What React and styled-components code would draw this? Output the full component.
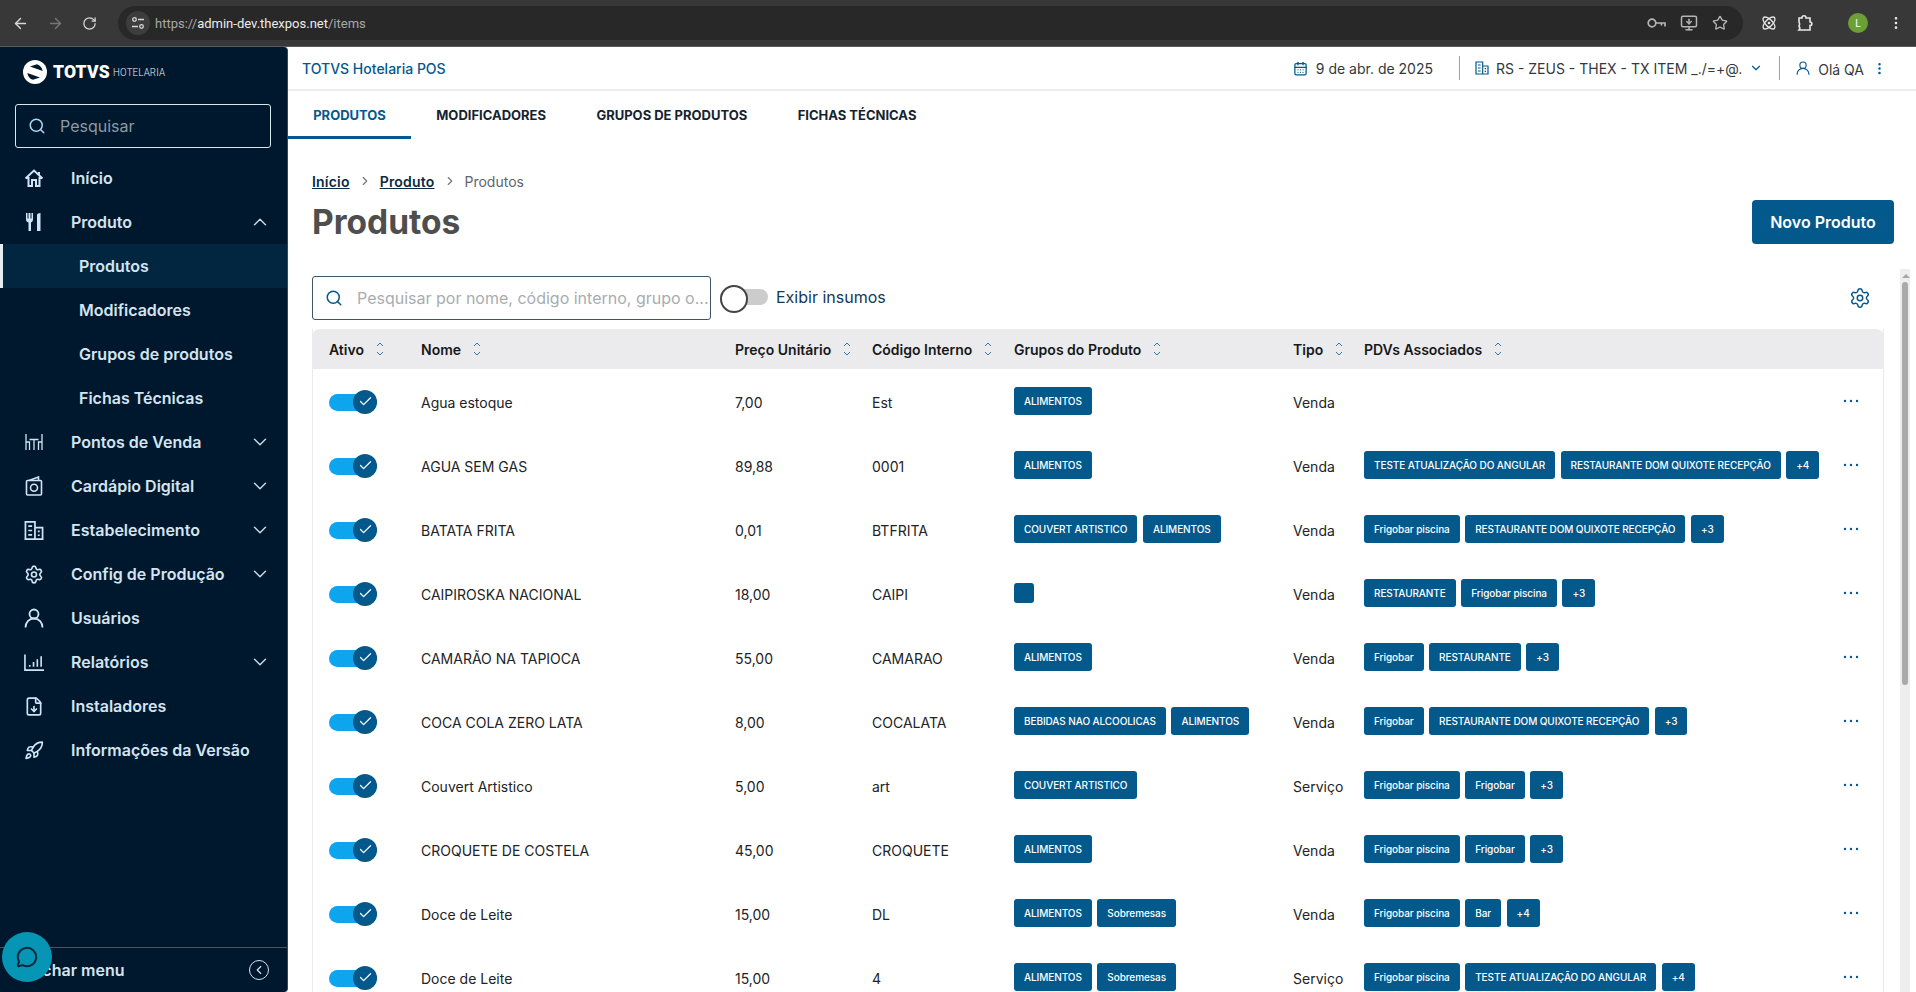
import styled, { createGlobalStyle } from 'styled-components';
import {
  ArrowLeft, ArrowRight, RotateCw, MonitorDown, Star, Atom,
  EllipsisVertical, Search, Settings, FileDown, Rocket,
  ChevronUp, ChevronDown, ChevronRight, ChevronLeft, CalendarDays, Check, MessageCircle,
} from 'lucide-react';

const GlobalStyle = createGlobalStyle`
  html, body { margin: 0; padding: 0; height: 100%; overflow: hidden; background: #fff; }
  body { font-family: Inter, "Liberation Sans", sans-serif; }
  * { box-sizing: border-box; }
`;

const primary = '#03588c';

const Page = styled.div`
  width: 1916px;
  height: 992px;
  display: flex;
  flex-direction: column;
  overflow: hidden;
  position: relative;
`;

// barra do navegador
const BrowserBar = styled.div`
  height: 47px;
  flex: none;
  display: flex;
  align-items: center;
  background: #383838;
  border-bottom: 1px solid #5a5a5a;
  color: #d8d8d8;
  padding-left: 12px;
`;
const NavIcons = styled.div`
  display: flex;
  align-items: center;
  gap: 18px;
  width: 106px;
  svg:nth-child(2) { color: #777; }
`;
const AddressPill = styled.div`
  width: 1625px;
  height: 34px;
  border-radius: 17px;
  background: #282828;
  display: flex;
  align-items: center;
  padding: 0 15px 0 8px;
`;
const SiteIcon = styled.span`
  width: 24px;
  height: 24px;
  border-radius: 50%;
  background: #3d3d3d;
  display: flex;
  align-items: center;
  justify-content: center;
  margin-right: 5px;
`;
const Url = styled.span`
  font: 13px Roboto, "Liberation Sans", sans-serif;
  color: #a8a8a8;
  b { font-weight: 400; color: #ececec; }
`;
const PillIcons = styled.div`
  margin-left: auto;
  display: flex;
  align-items: center;
  gap: 14px;
  color: #b5b5b5;
`;
const ChromeRight = styled.div`
  flex: 1;
  display: flex;
  align-items: center;
  justify-content: flex-end;
  gap: 20px;
  padding-right: 12px;
  color: #e8e8e8;
`;
const Avatar = styled.span`
  width: 20px;
  height: 20px;
  border-radius: 50%;
  background: #6c9f36;
  color: #fff;
  font: 10px Roboto, sans-serif;
  display: flex;
  align-items: center;
  justify-content: center;
  margin-left: 14px;
`;

const Body = styled.div`
  flex: 1;
  min-height: 0;
  display: flex;
`;

// menu lateral
const Sidebar = styled.aside`
  width: 288px;
  flex: none;
  background: #00182d;
  border-top-right-radius: 4px;
  border-bottom-right-radius: 4px;
  display: flex;
  flex-direction: column;
  border-right: 1px solid #3c4650;
`;
const LogoRow = styled.div`
  height: 57px;
  display: flex;
  align-items: center;
  padding: 0 0 7px 23px;
  color: #fff;
`;
const LogoText = styled.span`
  font: 900 17.500px Roboto, "Liberation Sans", sans-serif;
  margin-left: 6px;
  letter-spacing: .2px;
`;
const LogoSub = styled.span`
  display: inline-block;
  font: 300 11px Roboto, "Liberation Sans", sans-serif;
  margin-left: 3px;
  letter-spacing: .2px;
  color: #e8eef2;
  transform: scaleX(.88);
  transform-origin: left;
`;
const SideSearch = styled.div`
  margin: 0 16px 0 15px;
  height: 44px;
  border: 1px solid #dbe7ef;
  border-radius: 3px;
  display: flex;
  align-items: center;
  gap: 14px;
  padding-left: 12px;
  color: #a9d8f5;
  font-size: 16px;
  span { color: #8d9aa5; }
`;
const Nav = styled.nav`
  margin-top: 8px;
  display: flex;
  flex-direction: column;
`;
const NavItem = styled.div`
  height: 44px;
  display: flex;
  align-items: center;
  padding: ${p => (p.$sub ? '0 0 0 79px' : '0 16px 0 24px')};
  color: #d4e4f0;
  font-size: 16px;
  font-weight: 600;
  background: ${p => (p.$active ? '#02263f' : 'transparent')};
  ${p => p.$active && 'border-left: 3px solid #e6eef4; padding-left: 76px;'}
`;
const NavIcon = styled.span`
  width: 20px;
  height: 24px;
  margin-right: 27px;
  display: flex;
  align-items: center;
  justify-content: center;
  color: #cfe5f5;
`;
const NavChevron = styled.span`
  margin-left: auto;
  display: flex;
  color: #c8d8e4;
`;
const SideFooter = styled.div`
  margin-top: auto;
  height: 45px;
  border-top: 1px solid #4a545e;
  display: flex;
  align-items: center;
  justify-content: space-between;
  padding: 0 18px 0 24px;
  color: #d4e4f0;
  font-weight: 600;
  font-size: 16px;
`;
const CollapseBtn = styled.span`
  width: 20px;
  height: 20px;
  border: 1.5px solid #d4e4f0;
  border-radius: 50%;
  display: flex;
  align-items: center;
  justify-content: center;
`;
const ChatBubble = styled.div`
  position: absolute;
  left: 2px;
  top: 932px;
  width: 50px;
  height: 50px;
  border-radius: 50%;
  background: #0795b5;
  color: #012a3c;
  display: flex;
  align-items: center;
  justify-content: center;
`;

// conteudo
const Main = styled.main`
  flex: 1;
  min-width: 0;
  display: flex;
  flex-direction: column;
  background: #fff;
`;
const TopBar = styled.header`
  height: 44px;
  flex: none;
  border-bottom: 2px solid #ececee;
  display: flex;
  align-items: center;
  padding: 0 29px 0 14px;
  font-size: 14px;
  color: #33383d;
`;
const AppName = styled.span`
  color: ${primary};
  font-weight: 500;
  font-size: 14px;
`;
const TopInfo = styled.div`
  margin-left: auto;
  display: flex;
  align-items: center;
  height: 24px;
`;
const InfoBlock = styled.div`
  display: flex;
  align-items: center;
  gap: ${p => p.$gap ?? 8}px;
  padding-right: ${p => p.$pad ?? 24}px;
  color: #33383d;
  svg { color: ${primary}; }
`;
const InfoDivider = styled.span`
  width: 1px;
  height: 24px;
  background: #7fa9c4;
  margin-right: ${p => p.$space ?? 16}px;
`;
const Greeting = styled.span`
  margin-top: 3px;
`;
const Tabs = styled.div`
  height: 48px;
  flex: none;
  display: flex;
  align-items: stretch;
`;
const Tab = styled.div`
  padding: 0 25.200px;
  display: flex;
  align-items: center;
  font-size: 13px;
  font-weight: 700;
  color: ${p => (p.$active ? primary : '#14232f')};
  border-bottom: 3px solid ${p => (p.$active ? primary : 'transparent')};
  border-top: 3px solid transparent;
`;
const Content = styled.div`
  flex: 1;
  min-height: 0;
  display: flex;
  flex-direction: column;
  padding: 0 6px 0 24px;
`;
const Breadcrumb = styled.div`
  margin-top: 32px;
  height: 20px;
  flex: none;
  display: flex;
  align-items: center;
  gap: 8px;
  font-size: 14px;
  color: #60666c;
  svg { color: #777; }
`;
const Crumb = styled.a`
  color: #0c2a44;
  font-weight: 600;
  letter-spacing: .2px;
  text-decoration: underline;
`;
const TitleRow = styled.div`
  display: flex;
  align-items: flex-start;
  justify-content: space-between;
  height: 78px;
  flex: none;
  padding-right: 16px;
`;
const Title = styled.h1`
  margin: 9px 0 0;
  font-size: 33.500px;
  line-height: 44px;
  font-weight: 700;
  color: #4e4e4e;
`;
const PrimaryButton = styled.button`
  width: 142px;
  height: 44px;
  margin-top: 9px;
  border: 0;
  border-radius: 4px;
  background: ${primary};
  color: #fff;
  font: 600 16px Inter, sans-serif;
`;
const ScrollRow = styled.div`
  flex: 1;
  min-height: 0;
  display: flex;
  gap: 16px;
`;
const TableColumn = styled.div`
  flex: 1;
  min-width: 0;
  padding-top: 7px;
`;
const Toolbar = styled.div`
  height: 44px;
  display: flex;
  align-items: center;
`;
const FilterSearch = styled.div`
  width: 399px;
  height: 44px;
  border: 1px solid #3f5566;
  border-radius: 3px;
  display: flex;
  align-items: center;
  gap: 14px;
  padding-left: 12px;
  font-size: 16px;
  color: #a9acb0;
  white-space: nowrap;
  svg { color: ${primary}; }
`;
const SwitchOff = styled.span`
  width: 48px;
  height: 16px;
  margin: -3px 0 0 9px;
  background: #cccccc;
  border-radius: 8px;
  position: relative;
  &::before {
    content: '';
    position: absolute;
    left: 0;
    top: -4px;
    width: 24px;
    height: 24px;
    border-radius: 50%;
    border: 2px solid #444;
    background: #fff;
  }
`;
const SwitchLabel = styled.span`
  margin: -2px 0 0 8px;
  font-size: 16px;
  color: #123a58;
`;
const GearButton = styled.span`
  margin: 0 13px 0 auto;
  display: flex;
  color: ${primary};
`;
const Table = styled.div`
  margin-top: 9px;
  border-left: 1px solid #ebebed;
  border-right: 1px solid #ebebed;
`;
const Row = styled.div`
  display: grid;
  grid-template-columns: 92px 314px 137px 142px 279px 71px 1fr 44px;
  align-items: center;
  padding: 2px 0 0 16px;
  height: 64px;
  ${p => p.$head && 'height: 40px; padding: 0 0 0 17px; background: #ebebed; border-radius: 8px 8px 0 0; margin: 0 -1px;'}
`;
const HeadCell = styled.div`
  display: flex;
  align-items: center;
  gap: 12px;
  font-size: 14px;
  font-weight: 600;
  color: #16181a;
  white-space: nowrap;
`;
const SortIcon = styled.svg`
  flex: none;
  color: #2f78a8;
`;
const Cell = styled.div`
  font-size: 14px;
  color: #212326;
  white-space: nowrap;
`;
const ActiveSwitch = styled.span`
  display: block;
  width: 48px;
  height: 17px;
  background: #0ea5ef;
  border-radius: 9px;
  position: relative;
`;
const ActiveKnob = styled.span`
  position: absolute;
  right: 0;
  top: -4px;
  width: 24px;
  height: 24px;
  border-radius: 50%;
  background: ${primary};
  color: #fff;
  display: flex;
  align-items: center;
  justify-content: center;
`;
const TagList = styled.div`
  display: flex;
  align-items: center;
  gap: 5.500px;
  margin-top: -2px;
`;
const Tag = styled.span`
  height: ${p => (p.$empty ? 20 : 28)}px;
  min-width: 20px;
  padding: 0 ${p => (p.$empty ? 0 : 10)}px;
  border-radius: 3px;
  background: ${primary};
  color: #fff;
  font-size: 10px;
  font-weight: 500;
  letter-spacing: -.08px;
  display: flex;
  align-items: center;
  white-space: nowrap;
`;
const MoreCell = styled.div`
  display: flex;
  color: ${primary};
  margin: -2px 0 0 2px;
`;
const Scrollbar = styled.div`
  width: 10px;
  flex: none;
  background: #eeeeef;
  padding: 5px 2px 0;
`;
const ScrollArrow = styled.div`
  width: 0;
  height: 0;
  margin: 0 auto 4px;
  border-left: 4px solid transparent;
  border-right: 4px solid transparent;
  border-bottom: 4px solid #a8a8a8;
`;
const ScrollThumb = styled.div`
  height: 403px;
  background: #ababab;
  border-radius: 3px;
`;

const rows = [
  { nome: 'Agua estoque', preco: '7,00', cod: 'Est', grupos: ['ALIMENTOS'], tipo: 'Venda', pdvs: [] },
  { nome: 'AGUA SEM GAS', preco: '89,88', cod: '0001', grupos: ['ALIMENTOS'], tipo: 'Venda', pdvs: ['TESTE ATUALIZAÇÃO DO ANGULAR', 'RESTAURANTE DOM QUIXOTE RECEPÇÃO', '+4'] },
  { nome: 'BATATA FRITA', preco: '0,01', cod: 'BTFRITA', grupos: ['COUVERT ARTISTICO', 'ALIMENTOS'], tipo: 'Venda', pdvs: ['Frigobar piscina', 'RESTAURANTE DOM QUIXOTE RECEPÇÃO', '+3'] },
  { nome: 'CAIPIROSKA NACIONAL', preco: '18,00', cod: 'CAIPI', grupos: [''], tipo: 'Venda', pdvs: ['RESTAURANTE', 'Frigobar piscina', '+3'] },
  { nome: 'CAMARÃO NA TAPIOCA', preco: '55,00', cod: 'CAMARAO', grupos: ['ALIMENTOS'], tipo: 'Venda', pdvs: ['Frigobar', 'RESTAURANTE', '+3'] },
  { nome: 'COCA COLA ZERO LATA', preco: '8,00', cod: 'COCALATA', grupos: ['BEBIDAS NAO ALCOOLICAS', 'ALIMENTOS'], tipo: 'Venda', pdvs: ['Frigobar', 'RESTAURANTE DOM QUIXOTE RECEPÇÃO', '+3'] },
  { nome: 'Couvert Artistico', preco: '5,00', cod: 'art', grupos: ['COUVERT ARTISTICO'], tipo: 'Serviço', pdvs: ['Frigobar piscina', 'Frigobar', '+3'] },
  { nome: 'CROQUETE DE COSTELA', preco: '45,00', cod: 'CROQUETE', grupos: ['ALIMENTOS'], tipo: 'Venda', pdvs: ['Frigobar piscina', 'Frigobar', '+3'] },
  { nome: 'Doce de Leite', preco: '15,00', cod: 'DL', grupos: ['ALIMENTOS', 'Sobremesas'], tipo: 'Venda', pdvs: ['Frigobar piscina', 'Bar', '+4'] },
  { nome: 'Doce de Leite', preco: '15,00', cod: '4', grupos: ['ALIMENTOS', 'Sobremesas'], tipo: 'Serviço', pdvs: ['Frigobar piscina', 'TESTE ATUALIZAÇÃO DO ANGULAR', '+4'] },
];

const heads = ['Ativo', 'Nome', 'Preço Unitário', 'Código Interno', 'Grupos do Produto', 'Tipo', 'PDVs Associados'];

function HomeIcon() {
  return (
    <svg width="20" height="20" viewBox="0 0 20 20" fill="none" stroke="currentColor" strokeWidth="2">
      <path d="M1.500 10.500L10 2.500l8.500 8M4.500 9v9h3.500v-6h4v6h3.500V9M15 4v3" />
    </svg>
  );
}

function ForkKnifeIcon() {
  return (
    <svg width="16" height="18" viewBox="0 0 16 18" fill="currentColor">
      <path d="M0 0h1.500v5.500h1V0h2v5.500h1V0H7v6.500C7 8 6 9 5 9.500V18H2.500V9.500C1 9 0 8 0 6.500zM11 18V2c0-1 1-2 3.500-2v18z" />
    </svg>
  );
}

function PdvIcon() {
  return (
    <svg width="18" height="18" viewBox="0 0 18 18" fill="none" stroke="currentColor" strokeWidth="1.300">
      <path d="M1 1v16M1 9h3.500v8M4.500 6.500h9M9 6.500V17M13.500 17V9H17M17 1v16" />
    </svg>
  );
}

function CardapioIcon() {
  return (
    <svg width="18" height="20" viewBox="0 0 18 20" fill="none" stroke="currentColor" strokeWidth="1.600">
      <rect x="1.500" y="4.500" width="15" height="14.500" rx="1" />
      <circle cx="9" cy="11.800" r="3.500" />
      <path d="M4 4.500L13.500 1v3.500" />
    </svg>
  );
}

function BuildingIcon({ size = 21 }) {
  return (
    <svg width={size} height={size} viewBox="0 0 21 21" fill="none" stroke="currentColor" strokeWidth="1.800">
      <path d="M1.500 19.500V1.500h10v18zM11.500 7.500h8v12h-8zM0.500 19.500h20" />
      <path d="M4.500 6h4M4.500 10.500h4M4.500 15h4M14.500 11.500h2M14.500 15.500h2" />
    </svg>
  );
}

function PersonIcon({ size = 20, weight = 1.8 }) {
  return (
    <svg width={size} height={size} viewBox="0 0 20 20" fill="none" stroke="currentColor" strokeWidth={weight}>
      <circle cx="10" cy="6" r="4.500" />
      <path d="M1.500 19.500c0-5 3.500-9 8.500-9s8.500 4 8.500 9" />
    </svg>
  );
}

function ReportIcon() {
  return (
    <svg width="21" height="19" viewBox="0 0 21 19" fill="none" stroke="currentColor" strokeWidth="1.700">
      <path d="M1 1v16.500h20M6 14v-2M10 14V9M14 14V6M18 14V3" />
    </svg>
  );
}

function LogoMark() {
  return (
    <svg width="24" height="24" viewBox="0 0 24 24">
      <circle cx="12" cy="12" r="12" fill="#fff" />
      <path d="M7 6.500L14 4.200C17 5 19 7.500 19.700 11zM17 17.500L10 19.800C7 19 5 16.500 4.300 13z" fill="#00182d" />
    </svg>
  );
}

function TuneIcon() {
  return (
    <svg width="14" height="14" viewBox="0 0 14 14" fill="none" stroke="currentColor" strokeWidth="1.300">
      <circle cx="3.500" cy="3.500" r="1.800" />
      <path d="M7 3.500h6M1 10.500h6" />
      <circle cx="10.500" cy="10.500" r="1.800" />
    </svg>
  );
}

function KeyIcon() {
  return (
    <svg width="19" height="12" viewBox="0 0 19 12" fill="none" stroke="currentColor" strokeWidth="1.700">
      <circle cx="5" cy="6" r="3.800" />
      <path d="M8.800 6H18v3.500M14.500 6v2.500" />
    </svg>
  );
}

function ExtensionIcon() {
  return (
    <svg width="17" height="18" viewBox="0 0 17 18" fill="none" stroke="currentColor" strokeWidth="1.600">
      <path d="M2 4h3c0-3 4-3 4 0h4v4c2.500 0 2.500 3.500 0 3.500V16H2c1-1 1-2.500 0-4 1-1.500 1-2.500 0-4z" />
    </svg>
  );
}

function Sort() {
  return (
    <SortIcon width="8" height="14" viewBox="0 0 8 14" fill="none" stroke="currentColor" strokeWidth="1">
      <path d="M1 4l3-3 3 3M1 10l3 3 3-3" />
    </SortIcon>
  );
}

function Dots() {
  return (
    <svg width="20" height="6" viewBox="0 0 20 6" fill="currentColor">
      <circle cx="4" cy="3" r="1.200" />
      <circle cx="10" cy="3" r="1.200" />
      <circle cx="16" cy="3" r="1.200" />
    </svg>
  );
}

function MenuEntry({ icon, label, open, chevron }) {
  return (
    <NavItem>
      <NavIcon>{icon}</NavIcon>
      {label}
      {chevron && (
        <NavChevron>
          {open ? <ChevronUp size={22} strokeWidth={1.6} /> : <ChevronDown size={22} strokeWidth={1.6} />}
        </NavChevron>
      )}
    </NavItem>
  );
}

export default function App() {
  return (
    <Page>
      <GlobalStyle />
      <BrowserBar>
        <NavIcons>
          <ArrowLeft size={17} />
          <ArrowRight size={17} />
          <RotateCw size={15} />
        </NavIcons>
        <AddressPill>
          <SiteIcon><TuneIcon /></SiteIcon>
          <Url>https://<b>admin-dev.thexpos.net</b>/items</Url>
          <PillIcons>
            <KeyIcon />
            <MonitorDown size={18} />
            <Star size={16} />
          </PillIcons>
        </AddressPill>
        <ChromeRight>
          <Atom size={16} />
          <ExtensionIcon />
          <Avatar>L</Avatar>
          <EllipsisVertical size={16} />
        </ChromeRight>
      </BrowserBar>

      <Body>
        <Sidebar>
          <LogoRow>
            <LogoMark />
            <LogoText>TOTVS</LogoText>
            <LogoSub>HOTELARIA</LogoSub>
          </LogoRow>
          <SideSearch>
            <Search size={18} />
            <span>Pesquisar</span>
          </SideSearch>
          <Nav>
            <MenuEntry icon={<HomeIcon />} label="Início" />
            <MenuEntry icon={<ForkKnifeIcon />} label="Produto" chevron open />
            <NavItem $sub $active>Produtos</NavItem>
            <NavItem $sub>Modificadores</NavItem>
            <NavItem $sub>Grupos de produtos</NavItem>
            <NavItem $sub>Fichas Técnicas</NavItem>
            <MenuEntry icon={<PdvIcon />} label="Pontos de Venda" chevron />
            <MenuEntry icon={<CardapioIcon />} label="Cardápio Digital" chevron />
            <MenuEntry icon={<BuildingIcon />} label="Estabelecimento" chevron />
            <MenuEntry icon={<Settings size={23} />} label="Config de Produção" chevron />
            <MenuEntry icon={<PersonIcon />} label="Usuários" />
            <MenuEntry icon={<ReportIcon />} label="Relatórios" chevron />
            <MenuEntry icon={<FileDown size={21} />} label="Instaladores" />
            <MenuEntry icon={<Rocket size={21} />} label="Informações da Versão" />
          </Nav>
          <SideFooter>
            <span>Fechar menu</span>
            <CollapseBtn><ChevronLeft size={14} /></CollapseBtn>
          </SideFooter>
        </Sidebar>

        <Main>
          <TopBar>
            <AppName>TOTVS Hotelaria POS</AppName>
            <TopInfo>
              <InfoBlock $pad={26}>
                <CalendarDays size={15} />
                9 de abr. de 2025
              </InfoBlock>
              <InfoDivider $space={15} />
              <InfoBlock $pad={16} $gap={7}>
                <BuildingIcon size={14} />
                RS - ZEUS - THEX - TX ITEM _./=+@.
                <ChevronDown size={14} />
              </InfoBlock>
              <InfoDivider />
              <InfoBlock $pad={0}>
                <PersonIcon size={14} weight={1.6} />
                <Greeting>Olá QA</Greeting>
                <EllipsisVertical size={15} />
              </InfoBlock>
            </TopInfo>
          </TopBar>
          <Tabs>
            <Tab $active>PRODUTOS</Tab>
            <Tab>MODIFICADORES</Tab>
            <Tab>GRUPOS DE PRODUTOS</Tab>
            <Tab>FICHAS TÉCNICAS</Tab>
          </Tabs>
          <Content>
            <Breadcrumb>
              <Crumb>Início</Crumb>
              <ChevronRight size={14} />
              <Crumb>Produto</Crumb>
              <ChevronRight size={14} />
              Produtos
            </Breadcrumb>
            <TitleRow>
              <Title>Produtos</Title>
              <PrimaryButton>Novo Produto</PrimaryButton>
            </TitleRow>
            <ScrollRow>
              <TableColumn>
                <Toolbar>
                  <FilterSearch>
                    <Search size={18} />
                    Pesquisar por nome, código interno, grupo o...
                  </FilterSearch>
                  <SwitchOff />
                  <SwitchLabel>Exibir insumos</SwitchLabel>
                  <GearButton><Settings size={22} strokeWidth={1.6} /></GearButton>
                </Toolbar>
                <Table>
                  <Row $head>
                    {heads.map(h => (
                      <HeadCell key={h}>{h}<Sort /></HeadCell>
                    ))}
                  </Row>
                  {rows.map((r, i) => (
                    <Row key={i}>
                      <Cell>
                        <ActiveSwitch>
                          <ActiveKnob><Check size={15} strokeWidth={2} /></ActiveKnob>
                        </ActiveSwitch>
                      </Cell>
                      <Cell>{r.nome}</Cell>
                      <Cell>{r.preco}</Cell>
                      <Cell>{r.cod}</Cell>
                      <TagList>
                        {r.grupos.map((g, j) => <Tag key={j} $empty={!g}>{g}</Tag>)}
                      </TagList>
                      <Cell>{r.tipo}</Cell>
                      <TagList>
                        {r.pdvs.map((g, j) => <Tag key={j}>{g}</Tag>)}
                      </TagList>
                      <MoreCell><Dots /></MoreCell>
                    </Row>
                  ))}
                </Table>
              </TableColumn>
              <Scrollbar>
                <ScrollArrow />
                <ScrollThumb />
              </Scrollbar>
            </ScrollRow>
          </Content>
        </Main>
      </Body>
      <ChatBubble><MessageCircle size={22} strokeWidth={2.2} /></ChatBubble>
    </Page>
  );
}
